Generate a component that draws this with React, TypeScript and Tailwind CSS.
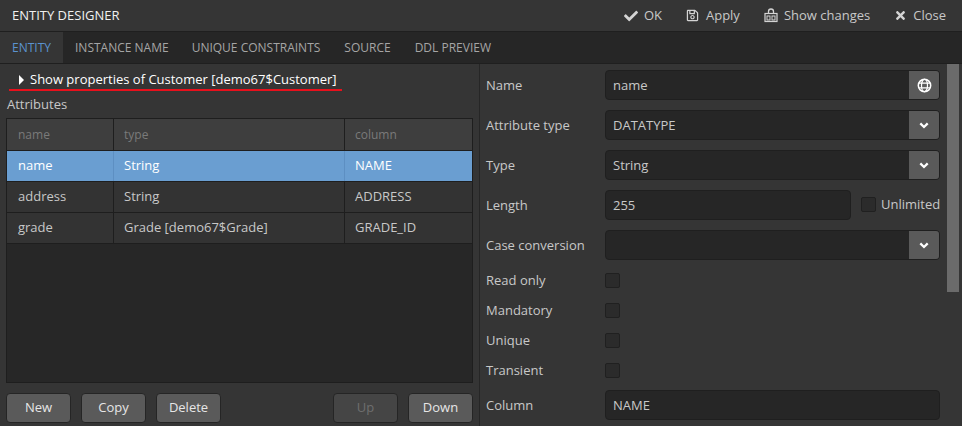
import { FaCheck, FaRegSave, FaTimes } from "react-icons/fa";

const cols = ["w-[107px] pl-[11px]", "w-[231px] pl-[10px]", "flex-1 pl-[10px]"];

function Row({ cells, selected }: { cells: string[]; selected?: boolean }) {
  return (
    <div className={`flex h-[31px] border-b border-[#1e1e1e] ${selected ? "bg-[#6a9ed1] text-white" : "text-[#c8c8c8]"}`}>
      {cells.map((c, i) => (
        <div
          key={c}
          className={`${cols[i]} flex items-center ${i < 2 ? `border-r ${selected ? "border-[#5d8fc2]" : "border-[#1e1e1e]"}` : ""}`}
        >
          {c}
        </div>
      ))}
    </div>
  );
}

function Btn({ label, disabled }: { label: string; disabled?: boolean }) {
  return (
    <button
      className={`h-[30px] w-[65px] rounded-[4px] border border-[#252525] ${disabled ? "bg-[#454545] text-[#6e6e6e]" : "bg-[#5a5a5a] text-[#e6e6e6]"}`}
    >
      {label}
    </button>
  );
}

function Field({ label, children, className = "", tall = true }: { label: string; children: React.ReactNode; className?: string; tall?: boolean }) {
  return (
    <div className={`flex items-center ${className}`}>
      <div className={`w-[119px] shrink-0 text-[#c8c8c8] ${tall ? "pt-[2px]" : ""}`}>{label}</div>
      {children}
    </div>
  );
}

function Chevron() {
  return (
    <svg width="10" height="7" viewBox="0 0 10 7" fill="none" className="mt-[1px]">
      <path d="M1.3 1.4 L5 5 L8.7 1.4" stroke="white" strokeWidth="2.3" />
    </svg>
  );
}

function Globe() {
  return (
    <svg width="15" height="15" viewBox="0 0 15 15" fill="none" stroke="white">
      <circle cx="7.5" cy="7.5" r="6.2" strokeWidth="1.5" />
      <ellipse cx="7.5" cy="7.5" rx="3" ry="6.2" strokeWidth="1.2" />
      <path d="M2 5.2 H13 M2 9.8 H13" strokeWidth="1.2" />
    </svg>
  );
}

function Box({ children, className = "" }: { children?: React.ReactNode; className?: string }) {
  return (
    <div className={`flex h-[30px] items-center overflow-hidden rounded-[4px] border border-[#1f1f1f] bg-[#262626] text-[#c8c8c8] ${className}`}>
      <span className="flex-1 pl-[7px] pt-[2px]">{children}</span>
    </div>
  );
}

function Select({ value }: { value?: string }) {
  return (
    <div className="flex h-[30px] w-[335px] items-center overflow-hidden rounded-[4px] border border-[#1f1f1f] bg-[#262626] text-[#c8c8c8]">
      <span className="flex-1 pl-[7px] pt-[2px]">{value}</span>
      <span className="flex h-full w-[30px] items-center justify-center bg-[#5a5a5a]">
        <Chevron />
      </span>
    </div>
  );
}

function Check({ className = "" }: { className?: string }) {
  return <div className={`size-[15px] rounded-[2px] border border-[#202020] bg-[#2b2b2b] ${className}`} />;
}

function Action({ icon, label, w }: { icon: React.ReactNode; label: string; w: string }) {
  return (
    <div className="flex items-center gap-[6px] text-[#c8c8c8]">
      <span className={`flex justify-center text-[#d4d4d4] ${w}`}>{icon}</span>
      {label}
    </div>
  );
}

function ChangesIcon() {
  return (
    <svg width="14" height="15" viewBox="0 0 14 15" fill="none" stroke="currentColor">
      <path d="M4.5 5 V3.5 A2.5 2.5 0 0 1 9.5 3.5 V5" strokeWidth="1.3" />
      <rect x="1" y="5.5" width="12" height="8" strokeWidth="1.2" />
      <rect x="3" y="8" width="3" height="4" strokeWidth="1" />
      <rect x="8" y="8" width="3" height="4" strokeWidth="1" />
    </svg>
  );
}

export default function App() {
  return (
    <div className="flex h-[426px] w-[962px] flex-col overflow-hidden bg-[#353535] text-[13px] font-['Open_Sans',sans-serif]">
      <div className="flex h-[32px] shrink-0 items-center justify-between border-b border-[#1f1f1f] bg-[#353535] pl-[12px] pr-[16px]">
        <div className="text-[#f0f0f0]">ENTITY DESIGNER</div>
        <div className="flex items-center gap-[24px]">
          <Action w="w-[14px]" icon={<FaCheck className="size-[14px]" />} label="OK" />
          <Action w="w-[14px]" icon={<FaRegSave className="size-[13px]" />} label="Apply" />
          <Action w="w-[14px]" icon={<ChangesIcon />} label="Show changes" />
          <Action w="w-[13px]" icon={<FaTimes className="size-[13px]" />} label="Close" />
        </div>
      </div>
      <div className="flex h-[32px] shrink-0 items-stretch border-b border-[#1f1f1f] bg-[#262626] text-[12px] text-[#a5a5a5]">
        <div className="flex w-[63px] items-center justify-center bg-[#353535] text-[#5b93cf]">ENTITY</div>
        <div className="flex items-center gap-[24px] pl-[12px]">
          <span>INSTANCE NAME</span>
          <span className="-ml-[1px]">UNIQUE CONSTRAINTS</span>
          <span>SOURCE</span>
          <span>DDL PREVIEW</span>
        </div>
      </div>
      <div className="flex min-h-0 flex-1">
        <div className="flex w-[480px] shrink-0 flex-col border-r border-[#262626] pl-[6px] pr-[6px]">
          <div className="mt-[6px] ml-[3px] w-[333px] border-b-2 border-[#e8101c] pl-[10px]">
            <div className="flex h-[19px] items-center gap-[6px] text-white">
              <svg width="5" height="10" viewBox="0 0 5 10" fill="white">
                <polygon points="0,0 5,5 0,10" />
              </svg>
              <span>Show properties of Customer [demo67$Customer]</span>
            </div>
          </div>
          <div className="mt-[3px] h-[24px] pl-[1px] leading-[20px] text-[#c8c8c8]">Attributes</div>
          <div className="flex h-[265px] flex-col border border-[#1e1e1e] bg-[#272727]">
            <div className="flex h-[32px] shrink-0 border-b border-[#1e1e1e] bg-[#3e3e3e] text-[12px] text-[#7a7a7a]">
              {["name", "type", "column"].map((c, i) => (
                <div key={c} className={`${cols[i]} flex items-center ${i < 2 ? "border-r border-[#1e1e1e]" : ""}`}>
                  {c}
                </div>
              ))}
            </div>
            <Row selected cells={["name", "String", "NAME"]} />
            <div className="bg-[#333333]">
              <Row cells={["address", "String", "ADDRESS"]} />
              <Row cells={["grade", "Grade [demo67$Grade]", "GRADE_ID"]} />
            </div>
          </div>
          <div className="mt-[10px] flex gap-[10px]">
            <Btn label="New" />
            <Btn label="Copy" />
            <Btn label="Delete" />
            <div className="flex-1" />
            <Btn label="Up" disabled />
            <Btn label="Down" />
          </div>
        </div>
        <div className="relative flex-1 pl-[6px] pt-[6px]">
          <div className="absolute right-[3px] top-0 h-[228px] w-[12px] bg-[#6b6b6b]" />
          <div className="flex flex-col">
            <Field label="Name">
              <div className="flex h-[30px] w-[335px] items-center overflow-hidden rounded-[4px] border border-[#1f1f1f] bg-[#262626] text-[#c8c8c8]">
                <span className="flex-1 pl-[7px] pt-[2px]">name</span>
                <span className="flex h-full w-[30px] items-center justify-center bg-[#5a5a5a]">
                  <Globe />
                </span>
              </div>
            </Field>
            <Field label="Attribute type" className="mt-[10px]"><Select value="DATATYPE" /></Field>
            <Field label="Type" className="mt-[10px]"><Select value="String" /></Field>
            <Field label="Length" className="mt-[10px]">
              <Box className="w-[246px]">255</Box>
              <Check className="ml-[10px] mt-[-2px]" />
              <span className="ml-[5px] mt-[-1px] text-[#c8c8c8]">Unlimited</span>
            </Field>
            <Field label="Case conversion" className="mt-[10px]"><Select /></Field>
            <Field label="Read only" tall={false} className="mt-[13px] h-[15px]"><Check /></Field>
            <Field label="Mandatory" tall={false} className="mt-[15px] h-[15px]"><Check /></Field>
            <Field label="Unique" tall={false} className="mt-[15px] h-[15px]"><Check /></Field>
            <Field label="Transient" tall={false} className="mt-[15px] h-[15px]"><Check /></Field>
            <Field label="Column" className="mt-[12px]"><Box className="w-[335px]">NAME</Box></Field>
          </div>
        </div>
      </div>
    </div>
  );
}
